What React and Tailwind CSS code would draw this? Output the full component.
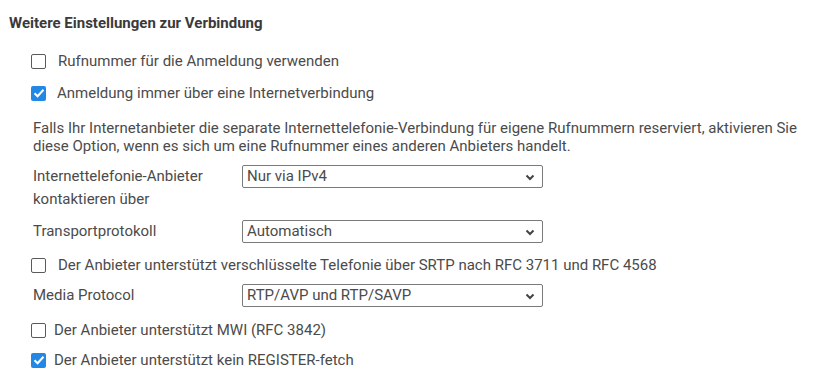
import { useState } from "react";

function Checkbox({ checked, onChange, label, textGap = "ml-[12px]", className = "" }) {
  return (
    <label className={`flex items-center h-[20px] pl-[31px] cursor-pointer ${className}`}>
      <span
        onClick={onChange}
        className={
          checked
            ? "w-[15px] h-[15px] rounded-[2px] bg-[#2188e6] flex items-center justify-center"
            : "w-[15px] h-[15px] rounded-[2px] border border-[#5a5a5a] bg-white"
        }
      >
        {checked && (
          <svg width="12" height="10" viewBox="0 0 12 10">
            <path d="M1.5 5.2 L4.6 8.2 L10.5 1.8" stroke="white" strokeWidth="2" fill="none" />
          </svg>
        )}
      </span>
      <span className={textGap}>{label}</span>
    </label>
  );
}

function Select({ value }) {
  return (
    <div className="relative w-[301px] h-[23px] border border-[#7a7a7a] rounded-[2px] bg-white flex items-center pl-[4px]">
      <span>{value}</span>
      <svg className="absolute right-[7px] top-[8px]" width="10" height="7" viewBox="0 0 10 7">
        <path d="M1.5 1.5 L5 5 L8.5 1.5" stroke="#444" strokeWidth="2" fill="none" />
      </svg>
    </div>
  );
}

export default function App() {
  const [opts, setOpts] = useState({ ruf: false, inet: true, srtp: false, mwi: false, reg: true });
  const toggle = (k) => setOpts({ ...opts, [k]: !opts[k] });

  return (
    <div className="w-[819px] h-[384px] bg-white text-[#4b4b4b] text-[15px] font-['Source_Sans_Pro','Roboto',sans-serif] overflow-hidden">
      <h2 className="pt-[14px] pl-[9px] text-[15px] leading-[18px] font-bold text-[#3a3a3a]">
        Weitere Einstellungen zur Verbindung
      </h2>

      <Checkbox className="mt-[19px]" checked={opts.ruf} onChange={() => toggle("ruf")} label="Rufnummer für die Anmeldung verwenden" />
      <Checkbox className="mt-[12px]" checked={opts.inet} onChange={() => toggle("inet")} label="Anmeldung immer über eine Internetverbindung" textGap="ml-[11px]" />

      <p className="mt-[16px] pl-[33px] pr-[10px] leading-[18px]">
        Falls Ihr Internetanbieter die separate Internettelefonie-Verbindung für eigene Rufnummern reserviert, aktivieren Sie diese Option, wenn es sich um eine Rufnummer eines anderen Anbieters handelt.
      </p>

      <div className="mt-[10px] pl-[33px] flex">
        <div className="w-[209px] leading-[23px]">
          Internettelefonie-Anbieter
          <br />
          kontaktieren über
        </div>
        <Select value="Nur via IPv4" />
      </div>

      <div className="mt-[9px] pl-[33px] flex items-center">
        <div className="w-[209px]">Transportprotokoll</div>
        <Select value="Automatisch" />
      </div>

      <Checkbox className="mt-[12px]" checked={opts.srtp} onChange={() => toggle("srtp")} label="Der Anbieter unterstützt verschlüsselte Telefonie über SRTP nach RFC 3711 und RFC 4568" />

      <div className="mt-[9px] pl-[33px] flex items-center">
        <div className="w-[209px]">Media Protocol</div>
        <Select value="RTP/AVP und RTP/SAVP" />
      </div>

      <Checkbox className="mt-[13px]" checked={opts.mwi} onChange={() => toggle("mwi")} label="Der Anbieter unterstützt MWI (RFC 3842)" textGap="ml-[8px]" />
      <Checkbox className="mt-[10px]" checked={opts.reg} onChange={() => toggle("reg")} label="Der Anbieter unterstützt kein REGISTER-fetch" textGap="ml-[8px]" />
    </div>
  );
}
